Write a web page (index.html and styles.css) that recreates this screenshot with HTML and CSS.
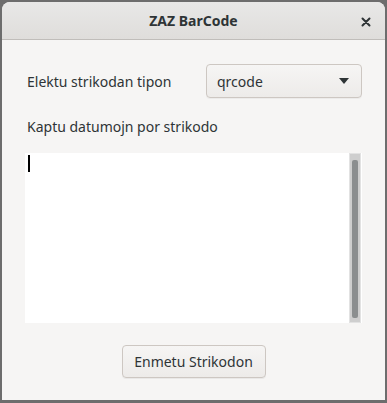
FILE: index.html
```html
<!DOCTYPE html>
<html lang="eo">
<head>
  <meta charset="UTF-8" />
  <title>ZAZ BarCode</title>
  <link rel="stylesheet" href="styles.css">
</head>
<body>

  <div class="window">
    <div class="titlebar">
      <span class="title">ZAZ BarCode</span>
      <span class="close">
        <svg width="10" height="10" viewBox="0 0 10 10">
          <path d="M1.5 1.5 L8.5 8.5 M8.5 1.5 L1.5 8.5" stroke="#2e3436" stroke-width="2" stroke-linecap="round"/>
        </svg>
      </span>
    </div>

    <div class="content">
      <div class="row">
        <label class="label">Elektu strikodan tipon</label>
        <div class="combo">
          <span>qrcode</span>
          <svg width="10" height="6" viewBox="0 0 10 6"><path d="M0 0 L10 0 L5 6 Z" fill="#2e3436"/></svg>
        </div>
      </div>

      <label class="label data-label">Kaptu datumojn por strikodo</label>

      <div class="textview">
        <span class="cursor"></span>
        <div class="scrollbar"><div class="thumb"></div></div>
      </div>

      <div class="actions">
        <button class="btn">Enmetu Strikodon</button>
      </div>
    </div>
  </div>

</body>
</html>
```

FILE: styles.css
```css
body {
  margin: 0;
  width: 387px;
  height: 403px;
  background: #6d6d6d;
  font-family: 'Noto Sans', 'Open Sans', sans-serif;
  font-size: 14px;
  color: #2e3436;
  overflow: hidden;
}

.window {
  margin: 2px 2px 0 2px;
  height: 398px;
  background: #f6f5f4;
  border-radius: 8px 8px 0 0;
  display: flex;
  flex-direction: column;
  overflow: hidden;
}

.titlebar {
  height: 37px;
  flex: none;
  background: linear-gradient(#e8e8e7, #dfdddb);
  border-bottom: 1px solid #c0bdba;
  display: flex;
  align-items: center;
  justify-content: center;
  position: relative;
}

.title {
  font-weight: 700;
  font-size: 14px;
  color: #2e3436;
}

.close {
  position: absolute;
  right: 14px;
  top: 15px;
  line-height: 0;
}

.content {
  flex: 1;
  padding: 24px 23px 0 23px;
  display: flex;
  flex-direction: column;
}

.row {
  display: flex;
  align-items: center;
  justify-content: space-between;
}

.label {
  padding-left: 2px;
  font-size: 14px;
}

.combo {
  width: 156px;
  height: 34px;
  box-sizing: border-box;
  border: 1px solid #cdc7c2;
  border-radius: 4px;
  background: linear-gradient(#f6f5f4, #edebe9);
  display: flex;
  align-items: center;
  justify-content: space-between;
  padding: 0 12px 0 10px;
  box-shadow: 0 1px 0 rgba(0,0,0,0.04);
}

.data-label {
  margin-top: 19px;
}

.textview {
  margin-top: 17px;
  height: 170px;
  background: #ffffff;
  position: relative;
}

.cursor {
  position: absolute;
  left: 3px;
  top: 2px;
  width: 2px;
  height: 17px;
  background: #000;
}

.scrollbar {
  position: absolute;
  right: 1px;
  top: 0;
  width: 12px;
  height: 170px;
  box-sizing: border-box;
  background: #cecece;
  border: 1px solid #e2e2e2;
  padding: 6px 2px 4px 2px;
}

.thumb {
  height: 100%;
  background: #8b8e8f;
  border-radius: 2px;
}

.actions {
  display: flex;
  justify-content: center;
  margin-top: 22px;
}

.btn {
  width: 144px;
  height: 33px;
  font-family: inherit;
  font-size: 14px;
  color: #2e3436;
  border: 1px solid #cdc7c2;
  border-radius: 4px;
  background: linear-gradient(#f6f5f4, #edebe9);
  box-shadow: 0 1px 0 rgba(0,0,0,0.05);
}
```
